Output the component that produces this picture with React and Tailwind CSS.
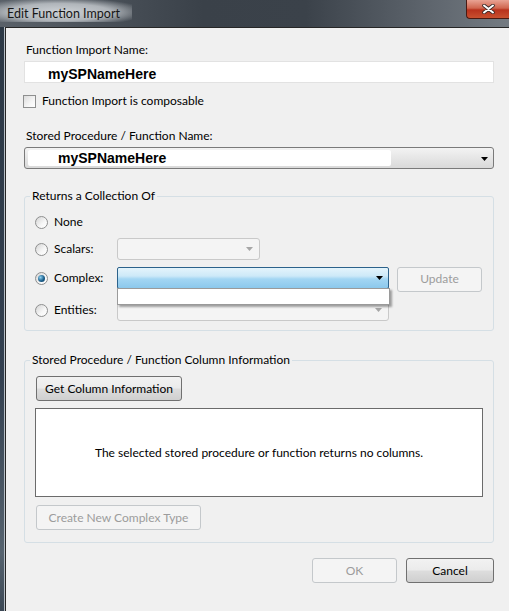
import React from 'react';

// Win7-style "Edit Function Import" dialog

const Radio = ({ checked }) => (
  <span className="relative flex w-[13px] h-[13px] shrink-0 items-center justify-center rounded-full border border-[#8e8f8f] bg-[linear-gradient(135deg,#d4d4d4,#f7f7f7_60%,#ffffff)]">
    {checked && (
      <span className="w-[7px] h-[7px] rounded-full bg-[radial-gradient(circle_at_35%_35%,#8fd2f2,#1b5f8c_55%,#0c3b5c)]" />
    )}
  </span>
);

const Arrow = ({ color }) => (
  <svg width="7" height="4" viewBox="0 0 7 4" className="shrink-0">
    <path d="M0 0h7L3.5 4z" fill={color} />
  </svg>
);

const Combo = ({ width, variant }) => {
  if (variant === 'hot') {
    return (
      <div className={`${width} h-[22px] flex items-center justify-end pr-[5px] rounded-[2px] border border-[#2c628b] bg-[linear-gradient(#e4f4fc,#cde9f8_40%,#a3d6f3_55%,#8cc8ec)]`}>
        <Arrow color="#000000" />
      </div>
    );
  }
  return (
    <div className={`${width} h-[22px] flex items-center justify-end pr-[6px] rounded-[3px] border border-[#c9c9c9] bg-[#f4f4f4]`}>
      <Arrow color="#a6a6a6" />
    </div>
  );
};

const WinButton = ({ children, width, disabled }) => (
  <div
    className={`${width} h-[25px] flex items-center justify-center rounded-[3px] border ${
      disabled
        ? 'border-[#c4c8cb] bg-[#f4f4f4] text-[#9c9c9c]'
        : 'border-[#707070] text-black bg-[linear-gradient(#f2f2f2,#ebebeb_48%,#dddddd_52%,#cfcfcf)]'
    }`}
  >
    {children}
  </div>
);

export default function App() {
  return (
    <div className="w-[509px] h-[611px] flex flex-col overflow-hidden font-['Lato',sans-serif] text-[12px] leading-[16px] text-black bg-[#2f3a45]">
      {/* title bar */}
      <div className="h-[27px] shrink-0 flex items-start bg-[linear-gradient(to_right,#5a6169,#3a4149_40%,#3b424a_60%,#5f666e_85%,#747b82)]">
        <div className="pl-[7px] pt-[6px] pr-[12px] text-[12.5px] text-[#161616] bg-[radial-gradient(ellipse_at_45%_55%,#cdd1d5_0%,#b0b5ba_50%,rgba(110,116,122,0)_85%)]">
          Edit Function Import
        </div>
        <div className="ml-auto w-[43px] h-[19px] flex items-center justify-center rounded-bl-[4px] border border-t-0 border-r-0 border-[#4a1a12] bg-[linear-gradient(#e9a394,#d0664f_45%,#b8321d_55%,#c8502f)]">
          <svg width="13" height="10" viewBox="0 0 13 10">
            <path d="M2 1.5l9 7M11 1.5l-9 7" stroke="#3a2a28" strokeWidth="3.6" strokeLinecap="round" />
            <path d="M2 1.5l9 7M11 1.5l-9 7" stroke="#ffffff" strokeWidth="2" strokeLinecap="round" />
          </svg>
        </div>
      </div>

      <div className="flex flex-1">
        {/* left frame */}
        <div className="w-[4px] bg-[linear-gradient(#2c3845,#334050_60%,#56636f_90%,#3c4855)]" />
        <div className="w-[1px] bg-[#b7bec5]" />

        {/* client area */}
        <div className="flex-1 flex flex-col border-l border-t border-[#262626] bg-[#f0f0f0] pl-[18px] pr-[15px] pt-[14px]">
          <div className="pl-[2px]">Function Import Name:</div>
          <div className="mt-[3px] h-[22px] bg-white border border-[#e2e2e2] pl-[23px] pt-[4px] font-['Liberation_Sans',sans-serif] font-bold text-[14px]">
            mySPNameHere
          </div>

          <div className="mt-[10px] h-[16px] flex items-center gap-[6px] -ml-[1px]">
            <span className="w-[13px] h-[13px] border border-[#8e8f8f] bg-[linear-gradient(135deg,#dcdcdc,#f5f5f5_60%,#ffffff)]" />
            <span>Function Import is composable</span>
          </div>

          <div className="mt-[19px] pl-[2px]">Stored Procedure / Function Name:</div>
          <div className="mt-[3px] h-[22px] flex items-center rounded-[3px] border border-[#7a7a7a] bg-[linear-gradient(#f3f3f3,#e6e6e6_50%,#d9d9d9)] pr-[5px]">
            <div className="ml-[3px] w-[363px] h-[16px] bg-white rounded-[2px] pl-[30px] font-['Liberation_Sans',sans-serif] font-bold text-[14px] leading-[16px]">
              mySPNameHere
            </div>
            <div className="ml-auto mt-[2px]">
              <Arrow color="#000000" />
            </div>
          </div>

          {/* group 1 */}
          <fieldset className="mt-[19px] border border-[#d5dfe5] rounded-[3px] pl-[10px] pr-[11px] pt-[7px] pb-[9px]">
            <legend className="-ml-[5px] px-[2px]">Returns a Collection Of</legend>
            <div className="h-[22px] flex items-center">
              <Radio />
              <span className="ml-[6px]">None</span>
            </div>
            <div className="mt-[5px] h-[22px] flex items-center">
              <Radio />
              <span className="ml-[6px] w-[63px]">Scalars:</span>
              <Combo width="w-[143px]" />
            </div>
            <div className="relative mt-[7px] h-[22px] flex items-center">
              <Radio checked />
              <span className="ml-[6px] w-[63px]">Complex:</span>
              <Combo width="w-[272px]" variant="hot" />
              <div className="ml-[8px] mt-[2px]">
                <WinButton width="w-[85px]" disabled>Update</WinButton>
              </div>
              {/* open dropdown list */}
              <div className="absolute left-[82px] top-[21px] z-10 w-[273px] h-[17px] bg-white border border-[#9a9a9a] shadow-[2px_2px_2px_rgba(0,0,0,0.35)]" />
            </div>
            <div className="mt-[10px] h-[22px] flex items-center">
              <Radio />
              <span className="ml-[6px] w-[63px]">Entities:</span>
              <Combo width="w-[272px]" />
            </div>
          </fieldset>

          {/* group 2 */}
          <fieldset className="mt-[21px] border border-[#d5dfe5] rounded-[3px] pl-[11px] pr-[10px] pt-[8px] pb-[12px]">
            <legend className="-ml-[6px] px-[2px]">Stored Procedure / Function Column Information</legend>
            <WinButton width="w-[146px]">Get Column Information</WinButton>
            <div className="mt-[7px] -ml-[1px] h-[89px] flex items-center justify-center bg-white border border-[#6b6b6b]">
              The selected stored procedure or function returns no columns.
            </div>
            <div className="mt-[8px]">
              <WinButton width="w-[165px]" disabled>Create New Complex Type</WinButton>
            </div>
          </fieldset>

          <div className="mt-[15px] flex justify-end gap-[9px]">
            <WinButton width="w-[85px]" disabled>OK</WinButton>
            <WinButton width="w-[88px]">Cancel</WinButton>
          </div>
        </div>
      </div>
    </div>
  );
}
